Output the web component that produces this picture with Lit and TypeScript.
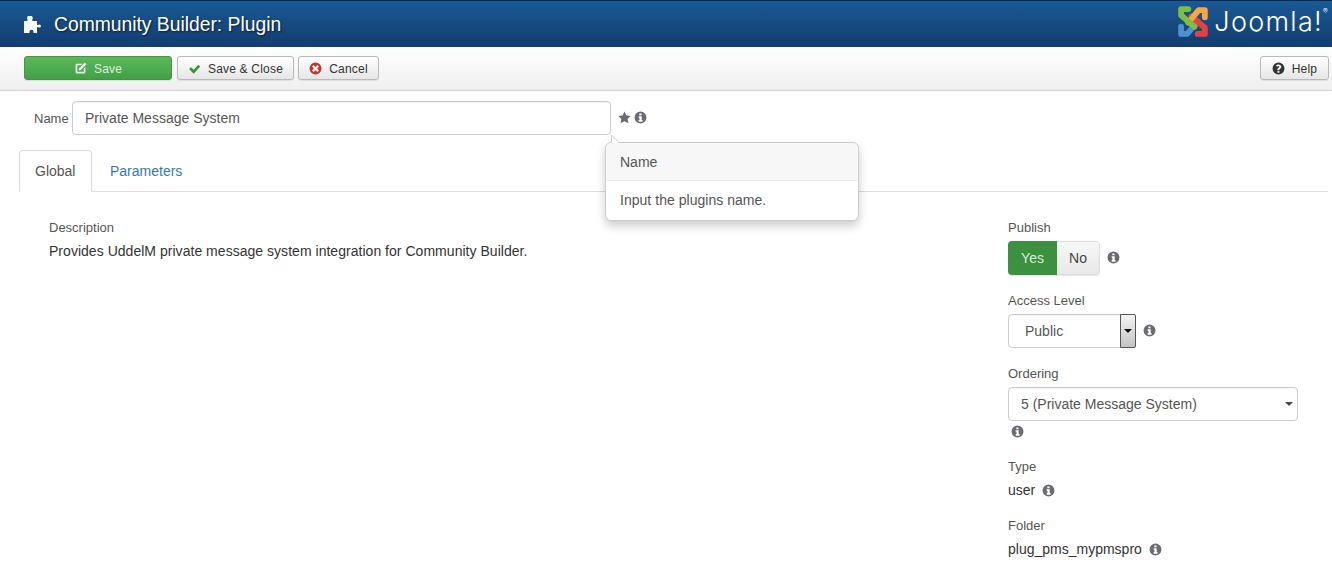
import { LitElement, html, css, svg } from "lit";
import { customElement } from "lit/decorators.js";

const info = () => html`<svg class="ic" viewBox="0 0 24 24"><path fill-rule="evenodd" d="M12 1a11 11 0 1 0 0 22 11 11 0 0 0 0-22zM9.800 4.500h4.200v3.400H9.800zM8.600 9.600h5.600v7.200h1.500v3H8.600v-3h1.400v-4.200H8.600z"/></svg>`;

const logo = svg`
  <g fill="none" stroke-width="5.600" stroke-linecap="round" stroke-linejoin="round">
    <path stroke="#4f91cd" d="M3 20 L3 27 L9 27 L19 15"/>
    <path stroke="#e8403c" d="M19 27 L26 27 L26 21 L13 10"/>
    <path stroke="#f9a541" d="M26 11 L26 4 L20 4 L10 16"/>
    <path stroke="#7ac143" d="M10 3 L3 3 L3 9 L16 20"/>
  </g>`;

@customElement("app-root")
export class AppRoot extends LitElement {
  static styles = css`
    :host { display: block; width: 1332px; height: 569px; overflow: hidden; position: relative; background: #fff;
      font-family: "Liberation Sans", Arial, sans-serif; font-size: 14px; color: #333; }
    * { box-sizing: border-box; }
    .ic { width: 13px; height: 13px; fill: #6b6b70; flex: none; display: block; }
    .head { height: 47px; border-top: 1px solid #0b2a4d; background: linear-gradient(#1a5a94, #123b6e);
      display: flex; align-items: center; padding: 0 9px 0 24px; color: #fff; }
    .head .puzzle { width: 18px; height: 18px; fill: #fff; flex: none; margin: 1px 12px 0 0; }
    .title { font-size: 19.300px; text-shadow: 1px 1px 2px rgba(0,0,0,.6); flex: 1; margin-top: 1px; }
    .brand { display: flex; align-items: center; gap: 5px; margin-top: -5px; }
    .brand svg { width: 31px; height: 31px; flex: none; }
    .word { font-family: "Inter", sans-serif; font-weight: 300; font-size: 27px; letter-spacing: 1.300px; color: #fff; line-height: 30px; position: relative; }
    .word sup { font-size: 7px; position: absolute; top: 1px; right: -6px; line-height: 8px; }
    .bar { height: 44px; border-bottom: 1px solid #d4d4d4; background: linear-gradient(#fff, #efefef);
      display: flex; align-items: center; gap: 5px; padding: 0 3px 1px 24px; }
    .btn { height: 24px; padding-top: 1px; border: 1px solid #b9b9b9; border-radius: 3px; background: linear-gradient(#fff, #e6e6e6);
      display: flex; align-items: center; justify-content: center; gap: 7px; font-size: 12px; color: #333;
      box-shadow: 0 1px 1px rgba(0,0,0,.08); letter-spacing: .2px; }
    .btn svg { width: 13px; height: 13px; flex: none; }
    .save { width: 148px; background: linear-gradient(#5cb85c, #43a047); border-color: #419641; color: #dcefdc; }
    .save svg { fill: #eaf5ea; }
    .sc { width: 117px; } .sc svg { fill: #3c8f3f; }
    .cancel { width: 81px; margin-left: -1px; } .cancel svg { fill: #c9302c; }
    .help { width: 69px; margin-left: auto; } .help svg { fill: #333; }
    .name { display: flex; align-items: center; padding: 10px 0 0 34px; height: 44px; }
    .name label { width: 38px; font-size: 13px; color: #555; }
    .field { height: 34px; border: 1px solid #ccc; border-radius: 4px; background: #fff; display: flex; align-items: center;
      color: #555; box-shadow: inset 0 1px 1px rgba(0,0,0,.05); }
    .name .field { width: 539px; padding-left: 12px; }
    .name .star { width: 13px; height: 13px; fill: #6b6b70; margin: 0 0 2px 7px; }
    .name .ic { margin: 0 0 2px 3px; }
    .tabs { display: flex; margin: 15px 4px 0 19px; height: 42px; border-bottom: 1px solid #ddd; }
    .tab { height: 42px; padding: 0 15px; display: flex; align-items: center; border: 1px solid transparent; color: #337ab7; margin-left: 2px; }
    .tab.on { width: 73px; margin-left: 0; color: #555; border-color: #ddd; border-bottom-color: #fff; border-radius: 4px 4px 0 0; background: #fff; }
    .main { display: flex; padding: 27px 0 0 49px; }
    .left { width: 959px; flex: none; }
    .lab { font-size: 13px; color: #555; line-height: 17px; height: 17px; }
    .desc { margin-top: 5px; line-height: 20px; color: #333; letter-spacing: .03px; }
    .right { width: 290px; flex: none; }
    .row { display: flex; align-items: center; }
    .row .ic { margin-left: 7px; }
    .row.ctl .ic { margin-top: 4px; }
    .group { display: flex; height: 34px; margin-top: 5px; width: 92px; border-radius: 4px; overflow: hidden; box-shadow: 0 1px 1px rgba(0,0,0,.1); }
    .yes { width: 49px; background: #3b9140; color: #d8efd8; display: flex; align-items: center; justify-content: center; }
    .no { width: 43px; background: linear-gradient(#f8f8f8, #e8e8e8); border: 1px solid #ddd; border-left: 0; border-radius: 0 4px 4px 0; display: flex; align-items: center; justify-content: center; color: #444; }
    .block { margin-top: 17px; }
    .block.type { margin-top: 20px; }
    .sel { width: 128px; margin-top: 5px; padding-left: 16px; position: relative; }
    .drop { position: absolute; right: -1px; top: -1px; bottom: -1px; width: 16px; border: 1px solid #555; border-radius: 0 2px 2px 0; background: linear-gradient(#f4f4f4, #c4c4c4); }
    .drop::after { content: ""; position: absolute; left: 3px; top: 14px; border: 4px solid transparent; border-top: 4px solid #111; border-bottom: 0; }
    .ord { width: 290px; margin-top: 5px; padding-left: 12px; position: relative; }
    .ord::after { content: ""; position: absolute; right: 4px; top: 14px; border: 4.500px solid transparent; border-top: 4.500px solid #444; border-bottom: 0; }
    .under { margin: 4px 0 0 3px; height: 13px; }
    .under .ic { margin-left: 0; }
    .val { margin-top: 5px; height: 20px; }
    .pop { position: absolute; left: 605px; top: 142px; width: 254px; height: 79px; background: #fff; border: 1px solid #ccc; border-radius: 6px;
      box-shadow: 0 5px 10px rgba(0,0,0,.2); color: #555; }
    .pop .tip { position: absolute; left: 5px; top: -8px; width: 11px; height: 9px; display: block; }
    .pop .h { position: relative; height: 38px; margin: 0 1px; padding: 0 13px; background: #f7f7f7; border-bottom: 1px solid #ebebeb; border-radius: 5px 5px 0 0; display: flex; align-items: center; }
    .pop .b { height: 38px; padding: 0 14px; display: flex; align-items: center; letter-spacing: .03px; }
  `;

  render() {
    return html`
      <div class="head">
        <svg class="puzzle" viewBox="0 0 18 18"><path d="M3.300 3.200a2.800 2.800 0 1 1 5.200 0c-.4.600-.6 1.100-.1 1.600.2.200.5.300.8.300H13v3.600c.3.500.8.500 1.300.2.400-.2.800-.3 1.100-.3a1.500 1.500 0 0 1 0 3c-.3 0-.7-.1-1.100-.3-.5-.3-1-.3-1.300.2V17H9.500v-1.200a2 2 0 0 0-4 0V17H0V5.100h2.500c.3 0 .6-.1.800-.3.500-.5.300-1 0-1.600z"/></svg>
        <div class="title">Community Builder: Plugin</div>
        <div class="brand">
          <svg viewBox="0 0 30 30">${logo}</svg>
          <div class="word">Joomla!<sup>®</sup></div>
        </div>
      </div>
      <div class="bar">
        <div class="btn save"><svg viewBox="0 0 24 24"><path fill-rule="evenodd" d="M5 3h11l-3 3H6v12h12v-6l3-3v10a2 2 0 0 1-2 2H5a2 2 0 0 1-2-2V5a2 2 0 0 1 2-2zM20 1l3 3-11 11H9v-3z"/></svg>Save</div>
        <div class="btn sc"><svg viewBox="0 0 24 24"><path d="M2 13l3.500-3.500 5 5L19 5l3.500 3.500L10.500 21.500z"/></svg>Save &amp; Close</div>
        <div class="btn cancel"><svg viewBox="0 0 24 24"><path fill-rule="evenodd" d="M12 1a11 11 0 1 0 0 22 11 11 0 0 0 0-22zM8.500 5.500L12 9l3.500-3.500 3 3L15 12l3.500 3.500-3 3L12 15l-3.500 3.500-3-3L9 12 5.500 8.500z"/></svg>Cancel</div>
        <div class="btn help"><svg viewBox="0 0 24 24"><path fill-rule="evenodd" d="M12 1a11 11 0 1 0 0 22 11 11 0 0 0 0-22zM12 4.500c3 0 5.200 1.800 5.200 4.300 0 2.200-1.300 3.100-2.500 3.900-.7.400-1 .8-1 1.500v.6H10v-1c0-1.700.8-2.600 2-3.400.8-.5 1.400-1 1.400-1.800 0-.8-.7-1.300-1.500-1.300-.9 0-1.600.5-2.200 1.300L7.300 6.900c1.100-1.500 2.700-2.400 4.700-2.400zM10 16.300h3.700V20H10z"/></svg>Help</div>
      </div>
      <div class="name">
        <label>Name</label>
        <div class="field">Private Message System</div>
        <svg class="star" viewBox="0 0 24 24"><path d="M12 .8l3.500 7.400 8 1-5.900 5.500 1.600 8L12 18.800l-7.200 3.900 1.600-8L.5 9.200l8-1z"/></svg>
        ${info()}
      </div>
      <div class="tabs">
        <div class="tab on">Global</div>
        <div class="tab">Parameters</div>
      </div>
      <div class="main">
        <div class="left">
          <div class="lab">Description</div>
          <div class="desc">Provides UddelM private message system integration for Community Builder.</div>
        </div>
        <div class="right">
          <div class="lab">Publish</div>
          <div class="row ctl">
            <div class="group"><div class="yes">Yes</div><div class="no">No</div></div>
            ${info()}
          </div>
          <div class="block">
            <div class="lab">Access Level</div>
            <div class="row ctl"><div class="field sel">Public<div class="drop"></div></div>${info()}</div>
          </div>
          <div class="block">
            <div class="lab">Ordering</div>
            <div class="field ord">5 (Private Message System)</div>
            <div class="under row">${info()}</div>
          </div>
          <div class="block type">
            <div class="lab">Type</div>
            <div class="val row">user${info()}</div>
          </div>
          <div class="block">
            <div class="lab">Folder</div>
            <div class="val row">plug_pms_mypmspro${info()}</div>
          </div>
        </div>
      </div>
      <div class="pop">
        <svg class="tip" viewBox="0 0 11 9"><path d="M.5 0 V9 H9 Z" fill="#fff"/><path d="M.5 0 V7 M.5 0 L8 7.500" fill="none" stroke="#ccc"/></svg>
        <div class="h">Name</div>
        <div class="b">Input the plugins name.</div>
      </div>
    `;
  }
}
